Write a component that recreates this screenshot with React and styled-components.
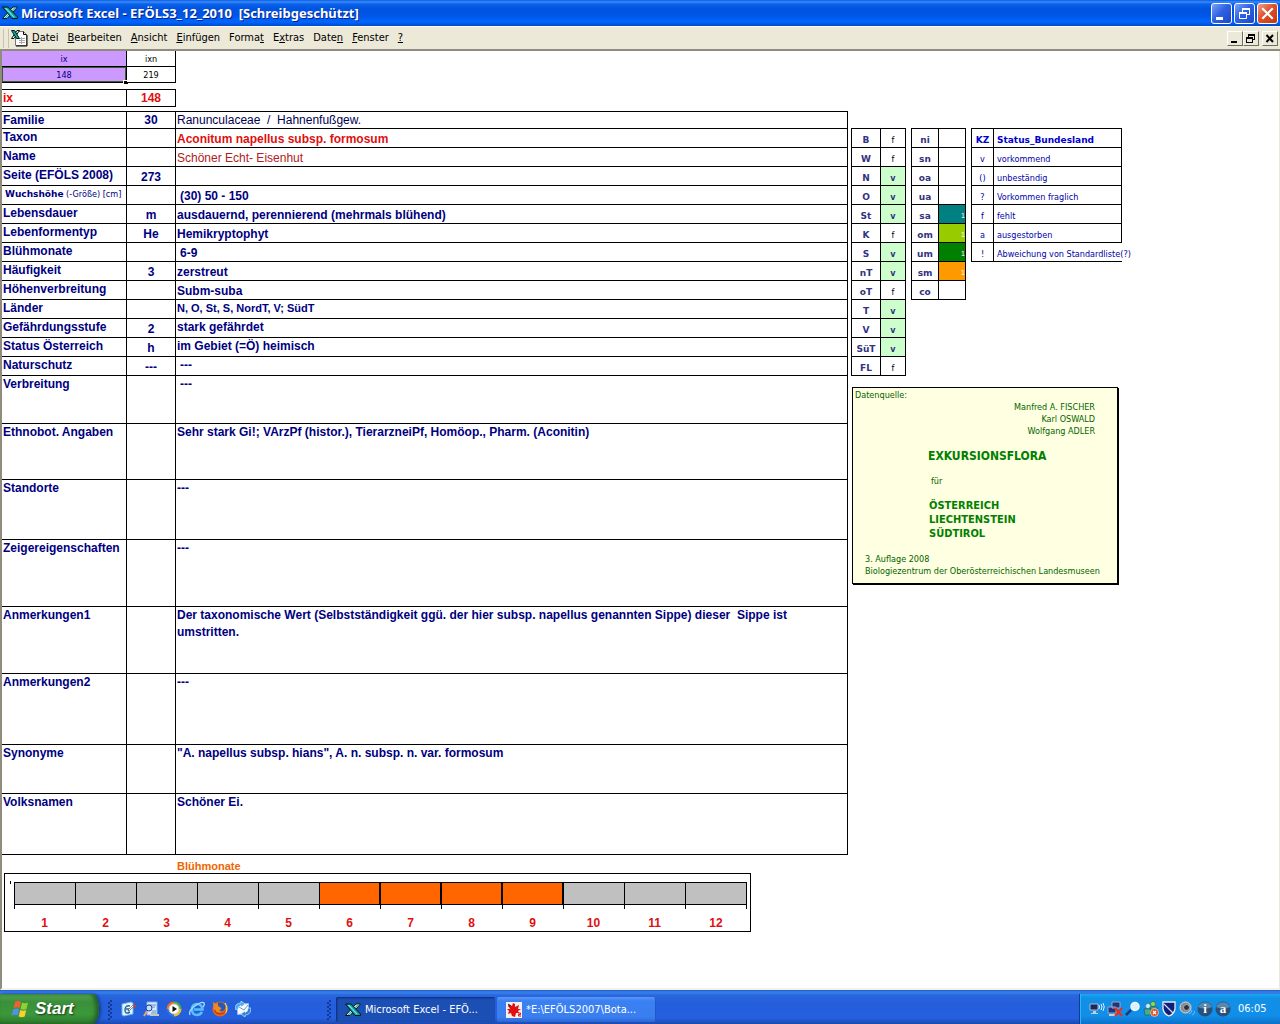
import React from "react";
import styled, { createGlobalStyle, css } from "styled-components";

const UI = '"DejaVu Sans Condensed", "DejaVu Sans", sans-serif';
const WIDE = '"DejaVu Sans", sans-serif';
const CAPTION = '"Noto Sans", sans-serif';
const ARIAL = '"Liberation Sans", Arial, sans-serif';

const Global = createGlobalStyle`
  *, *::before, *::after { box-sizing: border-box; }
  body { margin: 0; background: #fff; font-family: ${ARIAL}; }
  button { font: inherit; margin: 0; padding: 0; border: 0; background: none; color: inherit; }
`;

const Desktop = styled.div`
  display: flex;
  flex-direction: column;
  min-height: 100vh;
`;

/* ---------- title bar ---------- */
const TitleBar = styled.header`
  display: flex;
  align-items: center;
  height: 26px;
  padding: 0 2px;
  background: linear-gradient(#0a5ce6 0, #3a8cf8 2px, #0a62ea 4px, #0054e0 9px, #0055e5 15px, #0066ff 22px, #0048c8 26px);
  color: #fff;
`;
const Title = styled.h1`
  flex: 1;
  margin: 0 0 0 3px;
  font: bold 13px/26px ${CAPTION};
  white-space: pre;
  text-shadow: 1px 1px #0a1e8a;
`;
const WindowButtons = styled.div`
  display: flex;
  gap: 2px;
`;
const WindowButton = styled.button`
  display: flex;
  width: 21px;
  height: 21px;
  border: 1px solid #fff;
  border-radius: 3px;
  background: ${(p) =>
    p.$close
      ? "linear-gradient(135deg, #f0a088 0, #e0502c 45%, #c03810 100%)"
      : "linear-gradient(135deg, #7ba4f4 0, #2f63e4 45%, #1c48c8 100%)"};
`;

/* ---------- menu bar ---------- */
const MenuBar = styled.nav`
  display: flex;
  align-items: center;
  height: 25px;
  padding: 0 2px 0 3px;
  border-top: 1px solid #fbfbf5;
  border-bottom: 2px solid #8f8c7e;
  background: #ece9d8;
  color: #000;
`;
const Grip = styled.span`
  width: 6px;
  height: 19px;
  border: solid #c5c2b2;
  border-width: 0 1px;
  margin-right: 2px;
`;
const MenuItems = styled.div`
  display: flex;
  flex: 1;
  gap: 9px;
  margin-left: 4px;
`;
const MenuItem = styled.button`
  font: 11px/22px ${UI};
`;
const MdiButtons = styled.div`
  display: flex;
`;
const MdiButton = styled.button`
  display: flex;
  width: 16px;
  height: 15px;
  border: 1px solid;
  border-color: #fff #716f64 #716f64 #fff;
  background: #ece9d8;
  &:last-child { margin-left: 3px; }
`;

/* ---------- worksheet ---------- */
const Sheet = styled.main`
  flex: 1;
  border-left: 2px solid #8f8c7e;
  border-right: 1px solid #ece9d8;
  border-bottom: 2px solid #f4f2e8;
  background: #fff;
`;
const Grid = styled.table`
  width: ${(p) => p.$width}px;
  flex: none;
  table-layout: fixed;
  border-collapse: separate;
  border-spacing: 0;
  border: 0 solid #000;
  border-top-width: ${(p) => (p.$top ? 1 : 0)}px;
  border-left-width: ${(p) => (p.$left ? 1 : 0)}px;
  margin-bottom: ${(p) => p.$below || 0}px;
`;
const Row = styled.tr`
  height: ${(p) => p.$h}px;
`;
const cell = css`
  padding: 0;
  border: solid #000;
  border-width: 0 1px 1px 0;
`;
const IndexCell = styled.td`
  ${cell}
  position: relative;
  font: 9px/14px ${UI};
  text-align: center;
  color: ${(p) => (p.$fill ? "#000080" : "#000")};
  background: ${(p) => (p.$fill ? "#cc99ff" : "#fff")};
`;
const Selection = styled.span`
  position: absolute;
  inset: 0 0 0 0;
  border: 1px solid #3f5a2c;
  &::after {
    content: "";
    position: absolute;
    right: -3px;
    bottom: -3px;
    width: 5px;
    height: 4px;
    border: solid #fff;
    border-width: 1px 0 0 1px;
    background: #000;
  }
`;
const KeyLabel = styled.th`
  ${cell}
  padding-left: 1px;
  font: bold 12px/16px ${ARIAL};
  text-align: left;
  vertical-align: top;
  color: ${(p) => (p.$red ? "#f00000" : "#000080")};
`;
const SmallLabel = styled.span`
  display: block;
  padding-left: 2px;
  font: 9px/17px ${UI};
  white-space: nowrap;
  b { font-family: ${WIDE}; }
`;
const Code = styled.td`
  ${cell}
  font: bold 12px/16px ${ARIAL};
  text-align: center;
  vertical-align: bottom;
  color: ${(p) => (p.$red ? "#e01010" : "#000080")};
`;
const tones = {
  bold: css`font-weight: bold; color: #000080;`,
  small: css`font-weight: bold; font-size: 11px; color: #000080;`,
  plain: css`color: #000050;`,
  red: css`font-weight: bold; color: #e01010;`,
  brown: css`color: #b02020;`,
};
const Value = styled.td`
  ${cell}
  padding: 0 60px 0 ${(p) => (p.$indent ? 4 : 1)}px;
  font: 12px/16px ${ARIAL};
  line-height: ${(p) => (p.$v === "bottom" ? 16 : 17)}px;
  vertical-align: ${(p) => p.$v};
  white-space: pre-wrap;
  ${(p) => tones[p.$tone]}
`;
const Columns = styled.div`
  display: flex;
  align-items: flex-start;
`;
const Side = styled.aside`
  padding: 17px 0 0 3px;
`;
const SideTables = styled.div`
  display: flex;
  align-items: flex-start;
  gap: 5px;
`;
const Region = styled.th`
  ${cell}
  font: bold 9px/14px ${WIDE};
  text-align: center;
  vertical-align: bottom;
  color: #333380;
`;
const Status = styled.td`
  ${cell}
  font: 9px/14px ${UI};
  font-weight: ${(p) => (p.$present ? "bold" : "normal")};
  text-align: center;
  vertical-align: bottom;
  color: ${(p) => (p.$present ? "#333380" : "#000")};
  background: ${(p) => (p.$present ? "#ccffcc" : "#fff")};
`;
const Altitude = styled.td`
  ${cell}
  font: 7px/14px ${ARIAL};
  text-align: right;
  vertical-align: bottom;
  color: #fff;
  background: ${(p) => p.$fill || "#fff"};
`;
const Legend = styled.td`
  ${cell}
  padding-left: ${(p) => (p.$text ? 3 : 0)}px;
  border-right-width: ${(p) => (p.$open ? 0 : 1)}px;
  font: 9px/14px ${UI};
  text-align: ${(p) => (p.$text ? "left" : "center")};
  vertical-align: bottom;
  white-space: nowrap;
  color: #0000a8;
`;
const LegendHead = styled(Legend).attrs({ as: "th" })`
  font: bold 9px/14px ${WIDE};
  color: #0000d0;
`;

const Source = styled.section`
  width: 266px;
  margin: 11px 0 0 1px;
  padding: 1px 0 6px;
  border: 1px solid #000;
  box-shadow: 1px 1px #000;
  background: #ffffe1;
  color: #006400;
  font: 9px/12px ${UI};
`;
const SourceLine = styled.p`
  margin: 0 0 0 2px;
`;
const Authors = styled.p`
  margin: 0 22px 0 0;
  text-align: right;
`;
const SourceTitle = styled.h2`
  margin: 12px 0 12px 75px;
  font: bold 12px/14px ${UI};
  color: #008000;
`;
const SourceFor = styled.p`
  margin: 0 0 12px 78px;
`;
const Lands = styled.p`
  margin: 0 0 12px 76px;
  font: bold 11px/14px ${UI};
  color: #008000;
`;
const Edition = styled.p`
  margin: 0 0 0 12px;
  white-space: nowrap;
`;

/* ---------- flowering months ---------- */
const ChartTitle = styled.h2`
  margin: 0;
  padding: 5px 0 0 175px;
  font: bold 11px/13px ${ARIAL};
  color: #ee6600;
`;
const Chart = styled.section`
  width: 747px;
  height: 59px;
  margin-left: 2px;
  padding: 8px 0 0 9px;
  border: 1px solid #000;
  background: linear-gradient(#000, #000) 5px 7px / 1px 3px no-repeat;
`;
const Months = styled.ol`
  display: grid;
  grid-template-columns: repeat(11, 61px) 62px;
  width: 733px;
  margin: 0;
  padding: 0;
  list-style: none;
`;
const Month = styled.li`
  text-align: center;
  font: bold 12px/14px ${ARIAL};
  color: #e01010;
  &::before {
    content: "";
    display: block;
    height: 23px;
    border: 1px solid #000;
    border-right-width: ${(p) => (p.$on ? 1 : 0)}px;
    background: ${(p) => (p.$on ? "#ff6600" : "#c0c0c0")};
  }
  &:last-child::before { border-right-width: 1px; }
`;
const MonthNumber = styled.span`
  display: block;
  &::before {
    content: "";
    display: block;
    height: 4px;
    margin-bottom: 7px;
    border-left: 1px solid #000;
  }
  ${Month}:last-child &::before { border-right: 1px solid #000; }
`;

/* ---------- taskbar ---------- */
const TaskBar = styled.footer`
  display: flex;
  align-items: stretch;
  height: 34px;
  padding-top: 4px;
  background: linear-gradient(#1c50b8 0, #2f74e4 1px, #3580ea 3px, #2a66dd 5px, #245edb 14px, #2560e0 28px, #1c49b0 34px);
  color: #fff;
  font: 11px/24px ${UI};
`;
const StartButton = styled.button`
  display: flex;
  align-items: center;
  gap: 5px;
  width: 99px;
  padding-left: 11px;
  border-radius: 0 8px 8px 0 / 0 18px 18px 0;
  background: linear-gradient(#5aa858 0, #4c9f4a 3px, #3b8f3a 8px, #3c983b 20px, #2c7a2c 30px);
  box-shadow: inset -3px 0 4px #205c20, 2px 0 3px #183c98;
  font: italic bold 17px/28px ${ARIAL};
  text-shadow: 1px 1px 2px #103810;
`;
const Dots = styled.span`
  flex: none;
  align-self: stretch;
  width: 4px;
  margin: 6px ${(p) => (p.$tight ? 1 : 5)}px 4px 0;
  background: conic-gradient(#143a98 0 25%, transparent 0 50%, #143a98 0 75%, transparent 0) 0 0 / 4px 4px;
`;
const QuickLaunch = styled.div`
  display: flex;
  align-items: center;
  gap: 7px;
  width: 228px;
  padding-left: 9px;
`;
const PlainButton = styled.button`
  display: flex;
`;
const TaskButton = styled.button`
  display: flex;
  align-items: center;
  gap: 4px;
  width: 159px;
  height: 25px;
  margin: 3px 2px 0 0;
  padding-left: 9px;
  border-radius: 2px;
  background: ${(p) =>
    p.$active ? "#1c4fb4" : "linear-gradient(#5a98f8 0, #3a80f2 4px, #3a7ff0 20px, #2c66d4 25px)"};
  box-shadow: ${(p) => (p.$active ? "inset 1px 1px 2px #0c2c78" : "inset -1px 0 #2458c0")};
`;
const Tray = styled.div`
  display: flex;
  align-items: center;
  gap: 2px;
  width: 201px;
  margin-left: auto;
  padding-left: 9px;
  border-left: 1px solid #0c3c90;
  background: linear-gradient(#18a8f0 0, #1290e6 4px, #118ee8 22px, #0c70c8 30px);
  box-shadow: inset 1px 0 #28b8f8;
`;
const Clock = styled.time`
  margin-left: 5px;
`;

/* ---------- drawings ---------- */
const ExcelIcon = () => (
  <svg width="16" height="16" viewBox="0 0 16 16" aria-hidden="true">
    <path d="M11 2h4.500L5 13.500H.5z" fill="#d8fff0" stroke="#041814" />
    <path d="M12 3h1.500L4 13H2.500z" fill="#30b8a0" />
    <path d="M.5 2h5.500L15.500 12v1.500H10z" fill="#10989c" stroke="#041814" />
    <path d="M2.500 3h2L13 12.500h-1.500z" fill="#60e8e8" />
  </svg>
);
const BookIcon = () => (
  <svg width="17" height="17" viewBox="0 0 17 17" aria-hidden="true">
    <path d="M4.500 1.500h8l3 3v11h-11z" fill="#fff" stroke="#777" />
    <path d="M12.500 1.500v3h3M16 5v11H5" fill="none" stroke="#000" />
    <path d="M8 8.500h6M8 10.500h6M8 12.500h6M10.500 7v7" stroke="#a8a8a8" />
    <path d="M6 .5h2.500L3 8.500H.5z" fill="#d8fff0" stroke="#041814" />
    <path d="M.5 .5h3l5 8h-3z" fill="#10a8a8" stroke="#041814" />
  </svg>
);
const Minimize = () => (
  <svg width="19" height="19" viewBox="0 0 19 19" aria-hidden="true">
    <path d="M4 13h7v3H4z" fill="#fff" />
  </svg>
);
const Restore = () => (
  <svg width="19" height="19" viewBox="0 0 19 19" aria-hidden="true">
    <path d="M7 4h8v2H7zM7 4h1v4H7zM14 4h1v7h-3v-1h2z" fill="#fff" />
    <path d="M4.500 8.500h7v6h-7z" fill="none" stroke="#fff" />
    <path d="M4 8h8v2H4z" fill="#fff" />
  </svg>
);
const Close = () => (
  <svg width="19" height="19" viewBox="0 0 19 19" aria-hidden="true">
    <path d="M5 5l9 9M14 5l-9 9" stroke="#fff" strokeWidth="2.200" strokeLinecap="square" />
  </svg>
);
const MdiMin = () => (
  <svg width="14" height="13" viewBox="0 0 14 13" aria-hidden="true">
    <path d="M3 9h6v2H3z" />
  </svg>
);
const MdiRestore = () => (
  <svg width="14" height="13" viewBox="0 0 14 13" aria-hidden="true">
    <path d="M4 2h7v6H9V7h1V4H5v1H4zM2 5h7v6H2zM3 7v3h5V7z" fillRule="evenodd" />
  </svg>
);
const MdiClose = () => (
  <svg width="14" height="13" viewBox="0 0 14 13" aria-hidden="true">
    <path d="M3.500 3l6.500 7M10 3l-6.500 7" stroke="#000" strokeWidth="2" />
  </svg>
);
const Flag = () => (
  <svg width="19" height="18" viewBox="0 0 19 18" aria-hidden="true">
    <path d="M4 2q3-2 6 0L8.500 8q-3-1.500-6 .2z" fill="#f06030" />
    <path d="M11 2.500q3 1.500 6 0L15.500 9q-3 1.500-6 0z" fill="#90d030" />
    <path d="M2.200 9.500q3-2 6-.2L6.700 15.500q-3-1.500-6 .3z" fill="#5090f0" />
    <path d="M9.200 10q3 1.500 6 0L13.700 16.500q-3 1.500-6 0z" fill="#f8d030" />
  </svg>
);
const DesktopIcon = () => (
  <svg width="16" height="16" viewBox="0 0 16 16" aria-hidden="true">
    <path d="M2 3l9-2 2 1v11l-9 2-2-1z" fill="#e8f6ff" stroke="#68b0e0" />
    <path d="M10 5q-5-1-5 4t5 2M6 8h4L8 10" fill="none" stroke="#2068a8" strokeWidth="1.500" />
    <path d="M8 9l6-6 1 1-6 6z" fill="#fff" stroke="#333" strokeWidth=".5" />
    <path d="M13 4l2-1 1 3-2 1z" fill="#d04020" />
  </svg>
);
const ViewerIcon = () => (
  <svg width="16" height="16" viewBox="0 0 16 16" aria-hidden="true">
    <path d="M4 1h10v13H4z" fill="#d8ecff" stroke="#80b0e8" />
    <path d="M5 4h8M6 6h6M9 10h4M8 12h5" stroke="#6090c8" />
    <circle cx="6" cy="7" r="3" fill="#c0e0ff" stroke="#2838a0" />
    <path d="M4 10l-3 5" stroke="#e0a070" strokeWidth="2" />
    <path d="M7 14h9" stroke="#c8c8b8" strokeWidth="2" />
  </svg>
);
const MediaIcon = () => (
  <svg width="16" height="16" viewBox="0 0 16 16" aria-hidden="true">
    <path d="M8 8V.5A7.500 7.500 0 0 0 .5 8z" fill="#f07020" />
    <path d="M8 8V.5A7.500 7.500 0 0 1 15.500 8z" fill="#50b040" />
    <path d="M8 8h7.500A7.500 7.500 0 0 1 8 15.500z" fill="#f0c020" />
    <path d="M8 8H.5A7.500 7.500 0 0 0 8 15.500z" fill="#3070d0" />
    <circle cx="8" cy="8" r="5" fill="#fff" stroke="#ccc" />
    <path d="M6.500 5l4.500 3-4.500 3z" fill="#111" />
  </svg>
);
const BrowserIcon = () => (
  <svg width="16" height="16" viewBox="0 0 16 16" aria-hidden="true">
    <path d="M13 11q-2 3-5 3-5 0-5-5.500T8 3q5 0 5.500 5.500H5" fill="none" stroke="#58c0f8" strokeWidth="2.600" />
    <path d="M1 14Q-1 10 6 5t9-3q1 2-1 4" fill="none" stroke="#a0e0ff" strokeWidth="1.300" />
  </svg>
);
const FoxIcon = () => (
  <svg width="16" height="16" viewBox="0 0 16 16" aria-hidden="true">
    <circle cx="8" cy="8" r="7.500" fill="#e86818" />
    <path d="M1 1l3 2 3-1h5l3 3-1 6H2z" fill="#f08820" />
    <path d="M6 1.500q5-1.500 7.500 3Q14 9 10.500 10.500 8 11 7.500 9l2-1-1.500-2-2-1z" fill="#2858b8" />
    <path d="M2.500 9q1.500 4 5.500 4t6-4" fill="none" stroke="#c83c10" strokeWidth="1.500" />
    <path d="M13 2q3.500 5 .5 10" fill="none" stroke="#f8d048" strokeWidth="1.300" />
  </svg>
);
const MailIcon = () => (
  <svg width="16" height="16" viewBox="0 0 16 16" aria-hidden="true">
    <path d="M2.500 3.500l11-1v10l-11 1z" fill="#f4faff" stroke="#90c0e8" />
    <path d="M4 6l5 3 4-5" fill="none" stroke="#7098c0" />
    <path d="M0 8q0-6 6-6V0l4 3-4 3V4.500Q3 5 3 9z" fill="#48a8f0" stroke="#e0f8ff" strokeWidth=".6" />
    <path d="M16 7q0 7-6 7v2l-4-3 4-3v1.500q3-.5 3-4.500z" fill="#2f80dc" stroke="#e0f8ff" strokeWidth=".6" />
  </svg>
);
const LeafIcon = () => (
  <svg width="16" height="16" viewBox="0 0 16 16" aria-hidden="true">
    <path d="M0 0h16v16H0z" fill="#f4eeee" />
    <path d="M2 2l4 2 1-3 2 1v3l4-2-1 4h3l-3 2 1 2h-3l-1 4-3-1-1-3-3 1 1-3-2-2h3l-1-2z" fill="#e01010" />
    <path d="M2 2l3 2M2 4h2" stroke="#601010" />
    <path d="M12 11h2.500v1.500H12.500V14H15" fill="none" stroke="#e01010" />
  </svg>
);
const NetSound = () => (
  <svg width="16" height="16" viewBox="0 0 16 16" aria-hidden="true">
    <path d="M1 3h8v6H1z" fill="#182860" stroke="#b0b8c8" />
    <path d="M4 10h3v2h2v1H2v-1h2z" fill="#c8ccd8" />
    <path d="M10 4q1 2 0 4M12 3q2 3 0 6M14 2q2.500 4 0 8" fill="none" stroke="#e0f0ff" />
  </svg>
);
const NetOff = () => (
  <svg width="16" height="16" viewBox="0 0 16 16" aria-hidden="true">
    <path d="M5 1h8v6H5zM1 6h8v6H1z" fill="#203478" stroke="#98a8c8" />
    <path d="M2 14h7" stroke="#c8ccd8" strokeWidth="2" />
    <path d="M8 7l7 8M15 7l-7 8" stroke="#e83020" strokeWidth="2.200" />
  </svg>
);
const Lens = () => (
  <svg width="16" height="16" viewBox="0 0 16 16" aria-hidden="true">
    <path d="M1 14l5-5" stroke="#203878" strokeWidth="2.500" />
    <circle cx="10" cy="5.500" r="4" fill="#d8f0ff" stroke="#f4faff" strokeWidth="1.500" />
  </svg>
);
const People = () => (
  <svg width="16" height="16" viewBox="0 0 16 16" aria-hidden="true">
    <circle cx="10" cy="3" r="2.500" fill="#90d860" stroke="#205020" strokeWidth=".5" />
    <circle cx="5" cy="5" r="2.500" fill="#c0f0f8" stroke="#206080" strokeWidth=".5" />
    <path d="M7 6h7v5H8zM1 8h8l-1 6H2z" fill="#48b080" stroke="#184848" strokeWidth=".5" />
    <circle cx="11.500" cy="11.500" r="4" fill="#e05020" stroke="#fff" strokeWidth=".5" />
    <path d="M10 10l3 3M13 10l-3 3" stroke="#fff" strokeWidth="1.300" />
  </svg>
);
const Shield = () => (
  <svg width="16" height="16" viewBox="0 0 16 16" aria-hidden="true">
    <path d="M2 1h12v7q-1 5-6 7-5-2-6-7z" fill="#102078" stroke="#e8ecf4" strokeWidth="1.300" />
    <path d="M3 3l9 9" stroke="#d0d8f0" strokeWidth="1.200" />
  </svg>
);
const Speaker = () => (
  <svg width="16" height="16" viewBox="0 0 16 16" aria-hidden="true">
    <circle cx="6.500" cy="6.500" r="5.500" fill="#888c90" stroke="#d8dce0" />
    <circle cx="7.500" cy="6.500" r="3" fill="#303438" stroke="#b0b4b8" />
    <path d="M10 13q3-1 3-4M13 14q3-1 2.500-4" fill="none" stroke="#70b8ff" />
  </svg>
);
const BallSvg = styled.svg`
  font: bold 13px "Liberation Serif", serif;
  fill: #fff;
`;
const Ball = ({ letter }) => (
  <BallSvg width="16" height="16" viewBox="0 0 16 16" aria-hidden="true">
    <circle cx="8" cy="8" r="7.500" fill="#285078" />
    <path d="M1 6a7.500 7.500 0 0 1 14 0Q8 9 1 6z" fill="#5888b0" />
    <text x="8" y="12" textAnchor="middle">{letter}</text>
  </BallSvg>
);

/* ---------- data ---------- */
const records = [
  { h: 17, label: "Familie", code: "30", value: "Ranunculaceae  /  Hahnenfußgew.", tone: "plain", v: "bottom" },
  { label: "Taxon", value: "Aconitum napellus subsp. formosum", tone: "red", v: "bottom" },
  { label: "Name", value: "Schöner Echt- Eisenhut", tone: "brown", v: "bottom" },
  { label: "Seite (EFÖLS 2008)", code: "273", value: "", v: "bottom" },
  { label: <SmallLabel><b>Wuchshöhe</b> (-Größe) [cm]</SmallLabel>, value: "(30) 50 - 150", indent: true, v: "bottom" },
  { label: "Lebensdauer", code: "m", value: "ausdauernd, perennierend (mehrmals blühend)", v: "bottom" },
  { label: "Lebenformentyp", code: "He", value: "Hemikryptophyt", v: "bottom" },
  { label: "Blühmonate", value: "6-9", indent: true, v: "bottom" },
  { label: "Häufigkeit", code: "3", value: "zerstreut", v: "bottom" },
  { label: "Höhenverbreitung", value: "Subm-suba", v: "bottom" },
  { label: "Länder", value: "N, O, St, S, NordT, V; SüdT", tone: "small", v: "top" },
  { label: "Gefährdungsstufe", code: "2", value: "stark gefährdet", v: "top" },
  { label: "Status Österreich", code: "h", value: "im Gebiet (=Ö) heimisch", v: "top" },
  { label: "Naturschutz", code: "---", value: "---", indent: true, v: "top" },
  { h: 48, label: "Verbreitung", value: "---", indent: true, v: "top" },
  { h: 56, label: "Ethnobot. Angaben", value: "Sehr stark Gi!; VArzPf (histor.), TierarzneiPf, Homöop., Pharm. (Aconitin)", v: "top" },
  { h: 60, label: "Standorte", value: "---", v: "top" },
  { h: 67, label: "Zeigereigenschaften", value: "---", v: "top" },
  { h: 67, label: "Anmerkungen1", value: "Der taxonomische Wert (Selbstständigkeit ggü. der hier subsp. napellus genannten Sippe) dieser  Sippe ist umstritten.", v: "top" },
  { h: 71, label: "Anmerkungen2", value: "---", v: "top" },
  { h: 49, label: "Synonyme", value: '"A. napellus subsp. hians", A. n. subsp. n. var. formosum', v: "top" },
  { h: 61, label: "Volksnamen", value: "Schöner Ei.", v: "top" },
];
const regions = [
  ["B", "f"], ["W", "f"], ["N", "v"], ["O", "v"], ["St", "v"], ["K", "f"], ["S", "v"],
  ["nT", "v"], ["oT", "f"], ["T", "v"], ["V", "v"], ["SüT", "v"], ["FL", "f"],
];
const altitudes = [
  ["ni"], ["sn"], ["oa"], ["ua"], ["sa", "#008080"], ["om", "#99cc00"], ["um", "#008000"], ["sm", "#ff9900"], ["co"],
];
const legend = [
  ["v", "vorkommend"], ["()", "unbeständig"], ["?", "Vorkommen fraglich"],
  ["f", "fehlt"], ["a", "ausgestorben"], ["!", "Abweichung von Standardliste(?)"],
];
const menus = [
  ["", "D", "atei"], ["", "B", "earbeiten"], ["", "A", "nsicht"], ["", "E", "infügen"], ["Forma", "t", ""],
  ["E", "x", "tras"], ["Date", "n", ""], ["", "F", "enster"], ["", "?", ""],
];
const months = Array.from({ length: 12 }, (_, i) => i + 1);
const quick = [
  ["Desktop anzeigen", DesktopIcon], ["Bildbetrachter", ViewerIcon], ["Media Player", MediaIcon],
  ["Internet Explorer", BrowserIcon], ["Firefox", FoxIcon], ["Mail", MailIcon],
];

export default function App() {
  return (
    <Desktop>
      <Global />
      <TitleBar>
        <ExcelIcon />
        <Title>{"Microsoft Excel - EFÖLS3_12_2010  [Schreibgeschützt]"}</Title>
        <WindowButtons>
          <WindowButton aria-label="Minimieren"><Minimize /></WindowButton>
          <WindowButton aria-label="Wiederherstellen"><Restore /></WindowButton>
          <WindowButton aria-label="Schließen" $close><Close /></WindowButton>
        </WindowButtons>
      </TitleBar>
      <MenuBar>
        <Grip />
        <BookIcon />
        <MenuItems>
          {menus.map(([a, key, b]) => (
            <MenuItem key={a + key + b}>{a}<u>{key}</u>{b}</MenuItem>
          ))}
        </MenuItems>
        <MdiButtons>
          <MdiButton aria-label="Fenster minimieren"><MdiMin /></MdiButton>
          <MdiButton aria-label="Fenster wiederherstellen"><MdiRestore /></MdiButton>
          <MdiButton aria-label="Fenster schließen"><MdiClose /></MdiButton>
        </MdiButtons>
      </MenuBar>

      <Sheet>
        <Grid $width={174} $below={6}>
          <colgroup><col width="125" /><col width="49" /></colgroup>
          <tbody>
            <Row $h={16}><IndexCell $fill>ix</IndexCell><IndexCell>ixn</IndexCell></Row>
            <Row $h={16}><IndexCell $fill>148<Selection /></IndexCell><IndexCell>219</IndexCell></Row>
          </tbody>
        </Grid>
        <Grid $width={174} $top $below={4}>
          <colgroup><col width="125" /><col width="49" /></colgroup>
          <tbody>
            <Row $h={17}><KeyLabel scope="row" $red>ix</KeyLabel><Code $red>148</Code></Row>
          </tbody>
        </Grid>
        <Columns>
          <Grid $width={846} $top>
            <colgroup><col width="125" /><col width="49" /><col /></colgroup>
            <tbody>
              {records.map((r, i) => (
                <Row key={i} $h={r.h || 19}>
                  <KeyLabel scope="row">{r.label}</KeyLabel>
                  <Code>{r.code}</Code>
                  <Value $v={r.v} $tone={r.tone || "bold"} $indent={r.indent}>{r.value}</Value>
                </Row>
              ))}
            </tbody>
          </Grid>
          <Side>
            <SideTables>
              <Grid $width={55} $top $left>
                <colgroup><col width="29" /><col width="25" /></colgroup>
                <tbody>
                  {regions.map(([name, state]) => (
                    <Row key={name} $h={19}>
                      <Region scope="row">{name}</Region>
                      <Status $present={state === "v"}>{state}</Status>
                    </Row>
                  ))}
                </tbody>
              </Grid>
              <Grid $width={55} $top $left>
                <colgroup><col width="27" /><col width="27" /></colgroup>
                <tbody>
                  {altitudes.map(([name, fill]) => (
                    <Row key={name} $h={19}>
                      <Region scope="row">{name}</Region>
                      <Altitude $fill={fill}>{fill ? "1" : ""}</Altitude>
                    </Row>
                  ))}
                </tbody>
              </Grid>
              <Grid $width={151} $top $left>
                <colgroup><col width="22" /><col width="128" /></colgroup>
                <tbody>
                  <Row $h={19}><LegendHead>KZ</LegendHead><LegendHead $text>Status_Bundesland</LegendHead></Row>
                  {legend.map(([sign, text]) => (
                    <Row key={sign} $h={19}>
                      <Legend>{sign}</Legend>
                      <Legend $text $open={sign === "!"}>{text}</Legend>
                    </Row>
                  ))}
                </tbody>
              </Grid>
            </SideTables>
            <Source>
              <SourceLine>Datenquelle:</SourceLine>
              <Authors>Manfred A. FISCHER<br />Karl OSWALD<br />Wolfgang ADLER</Authors>
              <SourceTitle>EXKURSIONSFLORA</SourceTitle>
              <SourceFor>für</SourceFor>
              <Lands>ÖSTERREICH<br />LIECHTENSTEIN<br />SÜDTIROL</Lands>
              <Edition>3. Auflage 2008<br />Biologiezentrum der Oberösterreichischen Landesmuseen</Edition>
            </Source>
          </Side>
        </Columns>
        <ChartTitle>Blühmonate</ChartTitle>
        <Chart>
          <Months>
            {months.map((m) => (
              <Month key={m} $on={m >= 6 && m <= 9}><MonthNumber>{m}</MonthNumber></Month>
            ))}
          </Months>
        </Chart>
      </Sheet>

      <TaskBar>
        <StartButton><Flag />Start</StartButton>
        <QuickLaunch>
          <Dots $tight />
          {quick.map(([name, Icon]) => (
            <PlainButton key={name} aria-label={name}><Icon /></PlainButton>
          ))}
        </QuickLaunch>
        <Dots />
        <TaskButton $active><ExcelIcon />Microsoft Excel - EFÖ...</TaskButton>
        <TaskButton><LeafIcon />*E:\EFÖLS2007\Bota...</TaskButton>
        <Tray>
          <NetSound /><NetOff /><Lens /><People /><Shield /><Speaker />
          <Ball letter="i" /><Ball letter="a" />
          <Clock>06:05</Clock>
        </Tray>
      </TaskBar>
    </Desktop>
  );
}
